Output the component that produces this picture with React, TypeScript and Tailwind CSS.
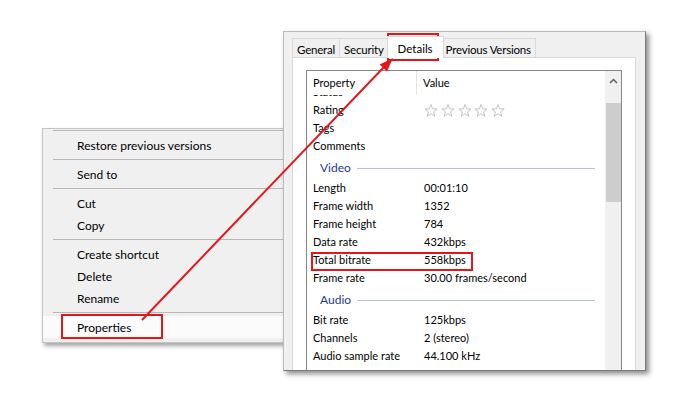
import React from 'react';

const UI_FONT = "font-['Lato','Noto_Sans',sans-serif]";

type MenuEntry = { label?: string; sep?: boolean; active?: boolean };

const menuEntries: MenuEntry[] = [
  { sep: true },
  { label: 'Restore previous versions' },
  { sep: true },
  { label: 'Send to' },
  { sep: true },
  { label: 'Cut' },
  { label: 'Copy' },
  { sep: true },
  { label: 'Create shortcut' },
  { label: 'Delete' },
  { label: 'Rename' },
  { sep: true },
  { label: 'Properties', active: true },
];

const ContextMenu: React.FC = () => (
  <div className="absolute left-[42px] top-[128px] w-[262px] h-[215px] bg-[#f0f0f0] border border-[#c4c4c4] shadow-[2px_3px_4px_rgba(0,0,0,0.35)]">
    {menuEntries.map((e, i) =>
      e.sep ? (
        <div key={i} className={`${i === 0 ? 'h-[5px] pt-[1px]' : 'h-[7px] pt-[3px]'} pl-[10px]`}>
          <div className="h-px bg-[#b8b8b8]" />
        </div>
      ) : (
        <div
          key={i}
          className={`h-[22px] flex items-center pl-[34px] pt-px text-[12px] text-black ${
            e.active ? 'bg-[#fbfbfb]' : ''
          }`}
        >
          {e.label}
        </div>
      )
    )}
  </div>
);

const Star: React.FC = () => (
  <svg width="14" height="14" viewBox="0 0 14 14" className="mr-[2.8px]">
    <polygon
      points="7,0.5 8.59,4.82 13.18,4.99 9.57,7.83 10.82,12.26 7,9.7 3.18,12.26 4.43,7.83 0.82,4.99 5.41,4.82"
      fill="none"
      stroke="#c2c2c2"
      strokeWidth="1"
      strokeLinejoin="round"
    />
  </svg>
);

type Row = { k?: string; v?: string; group?: string };

const rows: Row[] = [
  { k: 'Status', v: '' },
  { k: 'Rating', v: 'stars' },
  { k: 'Tags', v: '' },
  { k: 'Comments', v: '' },
  { group: 'Video' },
  { k: 'Length', v: '00:01:10' },
  { k: 'Frame width', v: '1352' },
  { k: 'Frame height', v: '784' },
  { k: 'Data rate', v: '432kbps' },
  { k: 'Total bitrate', v: '558kbps' },
  { k: 'Frame rate', v: '30.00 frames/second' },
  { group: 'Audio' },
  { k: 'Bit rate', v: '125kbps' },
  { k: 'Channels', v: '2 (stereo)' },
  { k: 'Audio sample rate', v: '44.100 kHz' },
];

const tabs = ['General', 'Security', 'Details', 'Previous Versions'];

const Dialog: React.FC = () => (
  <div className="absolute left-[283px] top-[31px] w-[363px] h-[340px] bg-[#f0f0f0] border border-[#bcbcbc] border-r-[#7a7a7a] border-b-[#7a7a7a] shadow-[3px_3px_5px_rgba(0,0,0,0.45)] overflow-hidden flex flex-col">
    {/* tabs */}
    <div className="flex items-end h-[25px] pt-[4px] pl-[8px] text-[11.5px] text-black">
      {tabs.map((t) =>
        t === 'Details' ? (
          <div
            key={t}
            className="relative z-10 -mx-[2px] h-[22px] -mb-px px-[10px] pt-[3px] bg-white border border-b-0 border-[#d9d9d9]"
          >
            {t}
          </div>
        ) : (
          <div
            key={t}
            className="h-[19px] px-[4px] pt-[2px] bg-[#f0f0f0] border border-b-0 border-[#d9d9d9] -ml-px first:ml-0 tracking-[-0.2px]"
          >
            {t}
          </div>
        )
      )}
    </div>
    {/* panel */}
    <div className="flex-1 ml-[8px] mr-[9px] bg-white border border-[#d9d9d9] pt-[12px] px-[13px]">
      <div className="h-[320px] border border-[#828790] flex">
        <div className="flex-1 flex flex-col text-[11px] text-black">
          <div className="h-[24px] flex items-center">
            <div className="w-[110px] h-full pl-[6px] flex items-center border-r border-[#e5e5e5]">
              Property
            </div>
            <div className="pl-[6px]">Value</div>
          </div>
          <div className="flex-1 overflow-hidden">
            <div className="-mt-[12px]">
              {rows.map((r, i) =>
                r.group ? (
                  <div key={i} className="h-[24px] flex items-center pl-[13px] pr-[10px] pt-[2px]">
                    <span className="text-[12px] text-[#1e3a8f]">{r.group}</span>
                    <div className="flex-1 h-px bg-[#b9c1df] ml-[6px]" />
                  </div>
                ) : (
                  <div key={i} className="h-[18px] flex items-center pt-px">
                    <div className="w-[117px] pl-[6px] shrink-0">{r.k}</div>
                    <div className="flex items-center">
                      {r.v === 'stars' ? (
                        <div className="flex items-center">
                          {[0, 1, 2, 3, 4].map((s) => (
                            <Star key={s} />
                          ))}
                        </div>
                      ) : (
                        r.v
                      )}
                    </div>
                  </div>
                )
              )}
            </div>
          </div>
        </div>
        {/* scrollbar */}
        <div className="w-[16px] bg-[#f0f0f0] flex flex-col items-center">
          <div className="h-[32px] w-full flex items-start justify-center pt-[7px]">
            <svg width="9" height="6" viewBox="0 0 9 6">
              <path d="M1 5 L4.5 1.5 L8 5" fill="none" stroke="#606060" strokeWidth="1.5" />
            </svg>
          </div>
          <div className="w-[15px] h-[99px] bg-[#cdcdcd]" />
        </div>
      </div>
    </div>
  </div>
);

export default function App() {
  return (
    <div className={`relative w-[700px] h-[407px] bg-white overflow-hidden ${UI_FONT}`}>
      <ContextMenu />
      <Dialog />
      <svg className="absolute inset-0 pointer-events-none" width="700" height="407">
        <rect x="388" y="34" width="50" height="26" fill="none" stroke="#e3161c" strokeWidth="2" />
        <rect x="312" y="253" width="160" height="17" fill="none" stroke="#e3161c" strokeWidth="2" />
        <rect x="62" y="315" width="100" height="23" fill="none" stroke="#e3161c" strokeWidth="2" />
        <line x1="142" y1="320" x2="384" y2="67" stroke="#e3161c" strokeWidth="2" />
        <polygon points="393,58 386.9,71.6 379.7,64.6" fill="#e3161c" />
      </svg>
    </div>
  );
}
